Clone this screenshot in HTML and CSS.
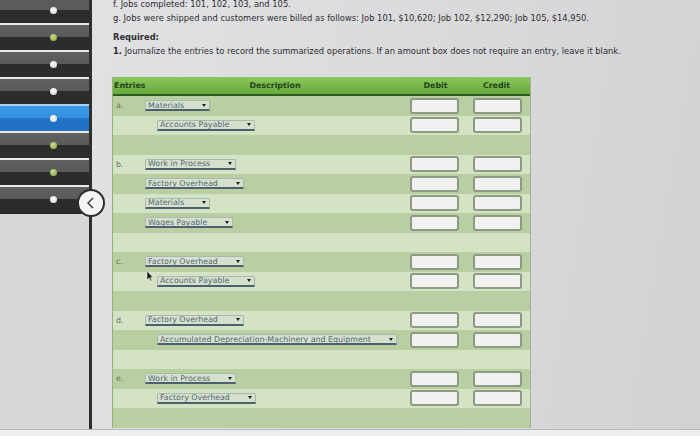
FILE: index.html
```html
<!DOCTYPE html>
<html lang="en">
<head>
    <meta charset="UTF-8">
    <meta name="viewport" content="width=device-width, initial-scale=1.0">
    <title>Journal Entries</title>
    <link rel="stylesheet" href="styles.css">
</head>
<body>
    <div class="screen">
        <aside class="sidebar">
            <div class="nav">
                <div class="nav-item first"><span class="dot"></span></div>
                <div class="nav-item"><span class="dot green"></span></div>
                <div class="nav-item"><span class="dot"></span></div>
                <div class="nav-item"><span class="dot"></span></div>
                <div class="nav-item active"><span class="dot"></span></div>
                <div class="nav-item"><span class="dot green"></span></div>
                <div class="nav-item"><span class="dot green"></span></div>
                <div class="nav-item"><span class="dot"></span></div>
            </div>
        </aside>
        <div class="divider"></div>

        <main class="content">
            <p class="line">f. Jobs completed: 101, 102, 103, and 105.</p>
            <p class="line">g. Jobs were shipped and customers were billed as follows: Job 101, $10,620; Job 102, $12,290; Job 105, $14,950.</p>
            <p class="required">Required:</p>
            <p class="line"><b>1.</b> Journalize the entries to record the summarized operations. If an amount box does not require an entry, leave it blank.</p>

            <div class="journal">
                <div class="journal-head">
                    <div class="col-entry">Entries</div>
                    <div class="col-desc">Description</div>
                    <div class="col-amt">Debit</div>
                    <div class="col-amt">Credit</div>
                </div>
                <div id="journalBody"></div>
            </div>
        </main>

        <button class="back-button" aria-label="Back">
            <svg width="14" height="14" viewBox="0 0 14 14"><polyline points="9,2 4,7 9,12" fill="none" stroke="#333" stroke-width="1.4"/></svg>
        </button>
        <svg class="cursor" width="8" height="12" viewBox="0 0 8 12"><path d="M1 1 L1 10 L3 8 L5 11 L6 10.5 L4.5 7.5 L7 7.5 Z" fill="#111" stroke="#eee" stroke-width="0.6"/></svg>
    </div>
    <div class="bottom-strip"></div>

    <script>
        // Journal rows: letter, account, indented (credit side), or blank spacer row
        const rows = [
            { letter: 'a.', account: 'Materials' },
            { account: 'Accounts Payable', indent: true },
            { blank: true },
            { letter: 'b.', account: 'Work in Process' },
            { account: 'Factory Overhead' },
            { account: 'Materials' },
            { account: 'Wages Payable' },
            { blank: true },
            { letter: 'c.', account: 'Factory Overhead' },
            { account: 'Accounts Payable', indent: true },
            { blank: true },
            { letter: 'd.', account: 'Factory Overhead' },
            { account: 'Accumulated Depreciation-Machinery and Equipment', indent: true },
            { blank: true },
            { letter: 'e.', account: 'Work in Process' },
            { account: 'Factory Overhead', indent: true },
            { blank: true }
        ];

        function buildJournal() {
            const body = document.getElementById('journalBody');
            body.innerHTML = '';
            rows.forEach((row, index) => {
                const shade = index % 2 === 0 ? 'dark' : 'light';
                if (row.blank) {
                    body.innerHTML += `<div class="journal-row ${shade}"></div>`;
                    return;
                }
                body.innerHTML += `
                    <div class="journal-row ${shade}">
                        <div class="col-entry letter">${row.letter || ''}</div>
                        <div class="col-desc">
                            <span class="dropdown${row.indent ? ' indent' : ''}">${row.account}<span class="arrow"></span></span>
                        </div>
                        <div class="col-amt"><span class="amount-box"></span></div>
                        <div class="col-amt credit"><span class="amount-box"></span></div>
                    </div>
                `;
            });
        }

        buildJournal();
    </script>
</body>
</html>
```

FILE: styles.css
```css
html, body {
    margin: 0;
    padding: 0;
}
body {
    width: 700px;
    height: 436px;
    overflow: hidden;
    font-family: "DejaVu Sans", Verdana, sans-serif;
    background-color: #dcdcde;
}
.screen {
    position: relative;
    display: flex;
    height: 429px;
    overflow: hidden;
    background: linear-gradient(100deg, #e3e2e5 0%, #dadadc 60%, #d2d2d4 100%);
}

/* left navigation strip */
.sidebar {
    width: 89px;
    flex-shrink: 0;
    background-color: #d8d6d9;
}
.nav {
    background-color: #2a2a2a;
    padding-bottom: 2px;
}
.nav-item {
    height: 25px;
    border-top: 2px solid #e9e9ea;
    background: linear-gradient(#606061 0, #5a5a5b 12px, #2c2c2d 12px);
    display: flex;
    justify-content: flex-start;
}
.nav-item.first {
    height: 23px;
    border-top: none;
    background: linear-gradient(#5c5c5d 0, #5a5a5b 10px, #2c2c2d 10px);
}
.nav-item.active {
    border-top-color: #a9d3f5;
    background: linear-gradient(#3c98e6 0, #3590df 12px, #1f72c6 12px);
}
.dot {
    width: 7px;
    height: 7px;
    border-radius: 50%;
    margin-left: 50px;
    margin-top: 9px;
    background: radial-gradient(circle at 40% 35%, #ffffff, #cfd0d2);
}
.nav-item.first .dot {
    margin-top: 7px;
}
.dot.green {
    background: radial-gradient(circle at 40% 35%, #c8e08a, #7fa33a);
}
.divider {
    width: 3px;
    flex-shrink: 0;
    background-color: #2e2e2f;
}
.back-button {
    position: absolute;
    left: 77px;
    top: 189px;
    width: 28px;
    height: 28px;
    border-radius: 50%;
    border: 2px solid #2e2e2f;
    background-color: #f3f3f4;
    padding: 0;
    display: flex;
    align-items: center;
    justify-content: center;
}
.cursor {
    position: absolute;
    left: 146px;
    top: 270px;
}

/* question text */
.content {
    flex: 1;
    padding-left: 20px;
    margin-top: -3px;
    color: #2e2e30;
    font-size: 8.35px;
}
.line {
    margin: 0;
    padding-left: 1px;
    line-height: 14px;
    white-space: nowrap;
}
.required {
    margin: 5px 0 0;
    padding-left: 1px;
    line-height: 14px;
    font-weight: bold;
}

/* journal table */
.journal {
    width: 419px;
    margin-top: 19px;
    border-left: 1px solid #93b27a;
    border-right: 1px solid #a3b296;
    box-sizing: border-box;
    font-size: 7.9px;
}
.journal-head {
    display: flex;
    height: 19px;
    align-items: center;
    background: linear-gradient(#8cc65e, #67a93b);
    border-bottom: 2px solid #2d5c1c;
    font-weight: bold;
    color: #23451a;
    box-sizing: border-box;
}
.journal-head .col-desc,
.journal-head .col-amt {
    text-align: center;
}
.col-entry {
    width: 32px;
    padding-left: 1px;
    box-sizing: border-box;
}
.col-desc {
    width: 260px;
}
.col-amt {
    width: 61px;
    padding-left: 5px;
    box-sizing: border-box;
}
.col-amt.credit {
    width: 64px;
    padding-left: 7px;
}
.journal-head .col-amt {
    padding-left: 0;
}
.journal-row {
    display: flex;
    align-items: center;
    height: 19.5px;
}
.journal-row.dark {
    background-color: #b9cfa1;
}
.journal-row.light {
    background-color: #d4e3c4;
}
.letter {
    padding-left: 3px;
    color: #6a7466;
}
.dropdown {
    display: inline-flex;
    align-items: center;
    height: 11px;
    padding: 0 3px 0 2px;
    gap: 18px;
    box-sizing: border-box;
    border: 1px solid #aab8b4;
    border-bottom: 2px solid #4d6070;
    border-radius: 2px 2px 0 0;
    background-color: #d6e1cd;
    color: #56687a;
    line-height: 9px;
    white-space: nowrap;
}
.dropdown.indent {
    margin-left: 12px;
}
.arrow {
    width: 0;
    height: 0;
    border-left: 2px solid transparent;
    border-right: 2px solid transparent;
    border-top: 3px solid #1e1e1e;
}
.amount-box {
    display: block;
    width: 49px;
    height: 16px;
    box-sizing: border-box;
    border: 2px solid #8d9a86;
    border-radius: 3px;
    background-color: #f1f2ef;
}
.bottom-strip {
    height: 7px;
    border-top: 1px solid #b8b8ba;
    background-color: #eeeeef;
}
```
